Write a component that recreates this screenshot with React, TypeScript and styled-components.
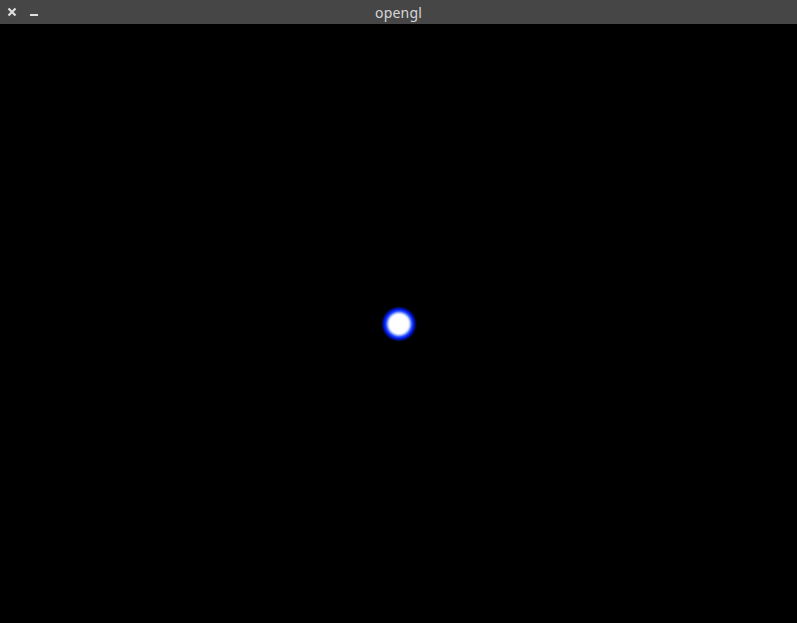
import React from "react";
import styled, { createGlobalStyle } from "styled-components";

const Global = createGlobalStyle`
  html, body { margin: 0; padding: 0; background: #000; }
  body { font-family: "Noto Sans", "Open Sans", sans-serif; }
`;

const Window = styled.div`
  display: flex;
  flex-direction: column;
  width: 797px;
  height: 623px;
  background: #000;
`;

const TitleBar = styled.div`
  position: relative;
  height: 24px;
  background: #464646;
  display: flex;
  align-items: center;
  justify-content: center;
`;

const Controls = styled.div`
  position: absolute;
  left: 7px;
  top: 0;
  height: 24px;
  display: flex;
  align-items: center;
  gap: 12px;
`;

const Title = styled.span`
  color: #d6d6d6;
  font-size: 14px;
  letter-spacing: 0.2px;
`;

const Canvas = styled.div`
  flex: 1;
  display: grid;
  place-items: center;
  background: #000;
`;

const Glow = styled.div`
  width: 36px;
  height: 36px;
  margin-left: 1px;
  background: radial-gradient(
    circle closest-side,
    #ffffff 0%,
    #ffffff 48%,
    #e8eeff 56%,
    #8aa2ff 64%,
    #2a4cff 72%,
    #0020f0 80%,
    #0010a0 87%,
    #000640 93%,
    #000000 100%
  );
`;

export default function App() {
  return (
    <>
      <Global />
      <Window>
        <TitleBar>
          <Controls>
            <svg width="10" height="10" viewBox="0 0 10 10">
              <path d="M1.5 1.5 L8.5 8.5 M8.5 1.5 L1.5 8.5" stroke="#e0e0e0" strokeWidth="2.2" />
            </svg>
            <svg width="10" height="10" viewBox="0 0 10 10">
              <path d="M1 8 H9" stroke="#e0e0e0" strokeWidth="2" />
            </svg>
          </Controls>
          <Title>opengl</Title>
        </TitleBar>
        <Canvas>
          <Glow />
        </Canvas>
      </Window>
    </>
  );
}
